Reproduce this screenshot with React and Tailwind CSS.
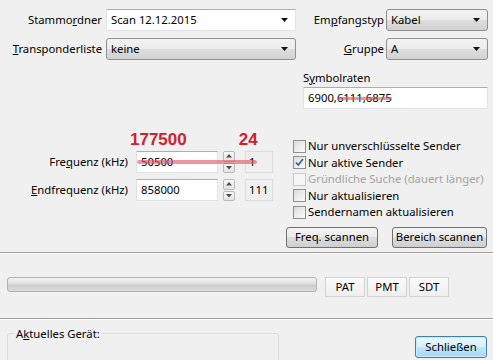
import React from 'react'

function Arrow() {
  return (
    <svg width="7" height="4" viewBox="0 0 7 4" className="shrink-0">
      <path d="M0 0h7L3.5 4z" fill="#111" />
    </svg>
  )
}

function Combo({ value, editable, className = '' }) {
  const look = editable
    ? 'bg-white border border-[#dfe3e8] border-t-[#abadb3]'
    : 'rounded-[3px] border border-[#8e8f8f] bg-[linear-gradient(#f3f3f3,#ebebeb_50%,#dddddd_50%,#d2d2d2)]'
  return (
    <div className={`h-[22px] flex items-center justify-between pl-[4px] pr-[7px] ${look} ${className}`}>
      <span>{value}</span>
      <Arrow />
    </div>
  )
}

function TextBox({ children, className = '' }) {
  return (
    <div className={`h-[22px] flex items-center pl-[4px] bg-white border border-[#dfe3e8] border-t-[#abadb3] ${className}`}>
      {children}
    </div>
  )
}

function Spin() {
  return (
    <div className="flex flex-col w-[12px] h-[22px] gap-[1px]">
      {['M0 3.5L3 0l3 3.5z', 'M0 0h6L3 3.5z'].map((d, i) => (
        <div key={i} className="flex-1 flex items-center justify-center border border-[#b9b9b9] rounded-[2px] bg-[linear-gradient(#f7f7f7,#e3e3e3)]">
          <svg width="6" height="4" viewBox="0 0 6 4">
            <path d={d} fill="#4d4d4d" />
          </svg>
        </div>
      ))}
    </div>
  )
}

function Check({ label, checked, disabled }) {
  return (
    <div className={`h-[16.5px] flex items-center gap-[2px] whitespace-nowrap ${disabled ? 'text-[#a3a3a3]' : ''}`}>
      <div className={`w-[13px] h-[13px] shrink-0 border flex items-center justify-center ${disabled ? 'border-[#c9c9c9] bg-[#f6f6f6]' : 'border-[#8e8f8f] bg-[linear-gradient(135deg,#dcdcdc,#fbfbfb)]'}`}>
        {checked && (
          <svg width="9" height="9" viewBox="0 0 9 9">
            <path d="M1 4.5l2.3 2.6L8 1" stroke="#3d5a98" strokeWidth="1.6" fill="none" />
          </svg>
        )}
      </div>
      <span>{label}</span>
    </div>
  )
}

function Button({ children, className = '' }) {
  return (
    <div className={`h-[21px] flex items-center justify-center whitespace-nowrap rounded-[3px] border border-[#707070] bg-[linear-gradient(#f2f2f2,#ebebeb_50%,#dddddd_50%,#cfcfcf)] ${className}`}>
      {children}
    </div>
  )
}

function Separator() {
  return <div className="w-full border-t border-[#a0a0a0] border-b border-b-white" />
}

export default function App() {
  return (
    <div className="w-[493px] h-[360px] overflow-hidden bg-[#f0f0f0] text-[11.3px] leading-[16px] text-[#000] font-['Noto_Sans',sans-serif] relative">

      {/* top: folder, list, type, group, symbol rates */}
      <div className="flex pt-[9px]">
        <div className="w-[303px] flex flex-col gap-[7px]">
          <div className="flex items-center">
            <span className="w-[102px] text-right">Stammo<u>r</u>dner</span>
            <Combo value="Scan 12.12.2015" editable className="ml-[4px] w-[190px]" />
          </div>
          <div className="flex items-center">
            <span className="w-[102px] text-right"><u>T</u>ransponderliste</span>
            <Combo value="keine" className="ml-[4px] w-[190px]" />
          </div>
        </div>
        <div className="w-[185px] flex flex-col">
          <div className="flex items-center">
            <span className="w-[81px] text-right">Em<u>p</u>fangstyp</span>
            <Combo value="Kabel" className="ml-[2px] w-[102px]" />
          </div>
          <div className="flex items-center mt-[7px]">
            <span className="w-[81px] text-right"><u>G</u>ruppe</span>
            <Combo value="A" className="ml-[2px] w-[102px]" />
          </div>
          <span className="mt-[10px]">S<u>y</u>mbolraten</span>
          <TextBox className="mt-[1px]">
            6900,<span className="line-through decoration-[3px] decoration-[#e0506099]">6111,6875</span>
          </TextBox>
        </div>
      </div>

      {/* frequencies + options */}
      <div className="flex">
        <div className="w-[286px] shrink-0 pt-[21px] relative">
          <div className="flex h-[19px] items-center font-['Liberation_Sans',sans-serif] font-bold text-[17px] text-[#d2202c]">
            <span className="ml-[130px]">177500</span>
            <span className="ml-[52px]">24</span>
          </div>
          <div className="flex items-center mt-[2px]">
            <span className="w-[128px] text-right">Fre<u>q</u>uenz (kHz)</span>
            <TextBox className="ml-[8px] w-[82px]">50500</TextBox>
            <div className="ml-[5px]"><Spin /></div>
            <div className="ml-[10px] w-[28px] h-[22px] pl-[3px] flex items-center border border-[#dcdcdc]">1</div>
          </div>
          <div className="flex items-center mt-[6px]">
            <span className="w-[128px] text-right"><u>E</u>ndfrequenz (kHz)</span>
            <TextBox className="ml-[8px] w-[82px]">858000</TextBox>
            <div className="ml-[5px]"><Spin /></div>
            <div className="ml-[10px] w-[28px] h-[22px] pl-[3px] flex items-center border border-[#dcdcdc]">111</div>
          </div>
          {/* red annotation stroke */}
          <div className="absolute left-[137px] top-[51px] w-[120px] h-[4px] bg-[#e0506099] rounded-full" />
        </div>
        <div className="flex flex-col pt-[29px]">
          <div className="pl-[7px]">
            <Check label="Nur unverschlüsselte Sender" />
            <Check label="Nur aktive Sender" checked />
            <Check label="Gründliche Suche (dauert länger)" disabled />
            <Check label="Nur aktualisieren" />
            <Check label="Sendernamen aktualisieren" />
          </div>
          <div className="flex mt-[6px] gap-[14px]">
            <Button className="w-[92px]">Freq. scannen</Button>
            <Button className="w-[95px]">Bereich scannen</Button>
          </div>
        </div>
      </div>

      <div className="mt-[4px]"><Separator /></div>

      {/* progress + tables */}
      <div className="flex items-start mt-[23px] pl-[7px]">
        <div className="w-[310px] h-[15px] rounded-[3px] border border-[#b2b2b2] bg-[linear-gradient(#f3f3f3,#e0e0e0_45%,#cdcdcd_55%,#dcdcdc)]" />
        <div className="flex ml-[8px] gap-[2px]">
          {['PAT', 'PMT', 'SDT'].map(t => (
            <div key={t} className="w-[40px] h-[20px] flex items-center justify-center border border-[#d3d3d3] bg-[linear-gradient(#fbfbfb,#efefef)]">{t}</div>
          ))}
        </div>
      </div>

      <div className="mt-[21px]"><Separator /></div>

      {/* device group + close */}
      <div className="flex items-start pl-[7px] mt-[6px]">
        <fieldset className="w-[272px] h-[50px] border border-[#d5dfe5] rounded-[3px] px-[6px]">
          <legend className="px-[2px]">A<u>k</u>tuelles Gerät:</legend>
        </fieldset>
        <div className="ml-[136px] mt-[10px] w-[72px] h-[22px] flex items-center justify-center rounded-[3px] border border-[#3c7fb1] bg-[linear-gradient(#eaf6fd,#d9f0fc_50%,#bee6fd_50%,#a7d9f5)] shadow-[inset_0_0_0_1px_#cdeaf8]">
          Schließen
        </div>
      </div>
    </div>
  )
}
